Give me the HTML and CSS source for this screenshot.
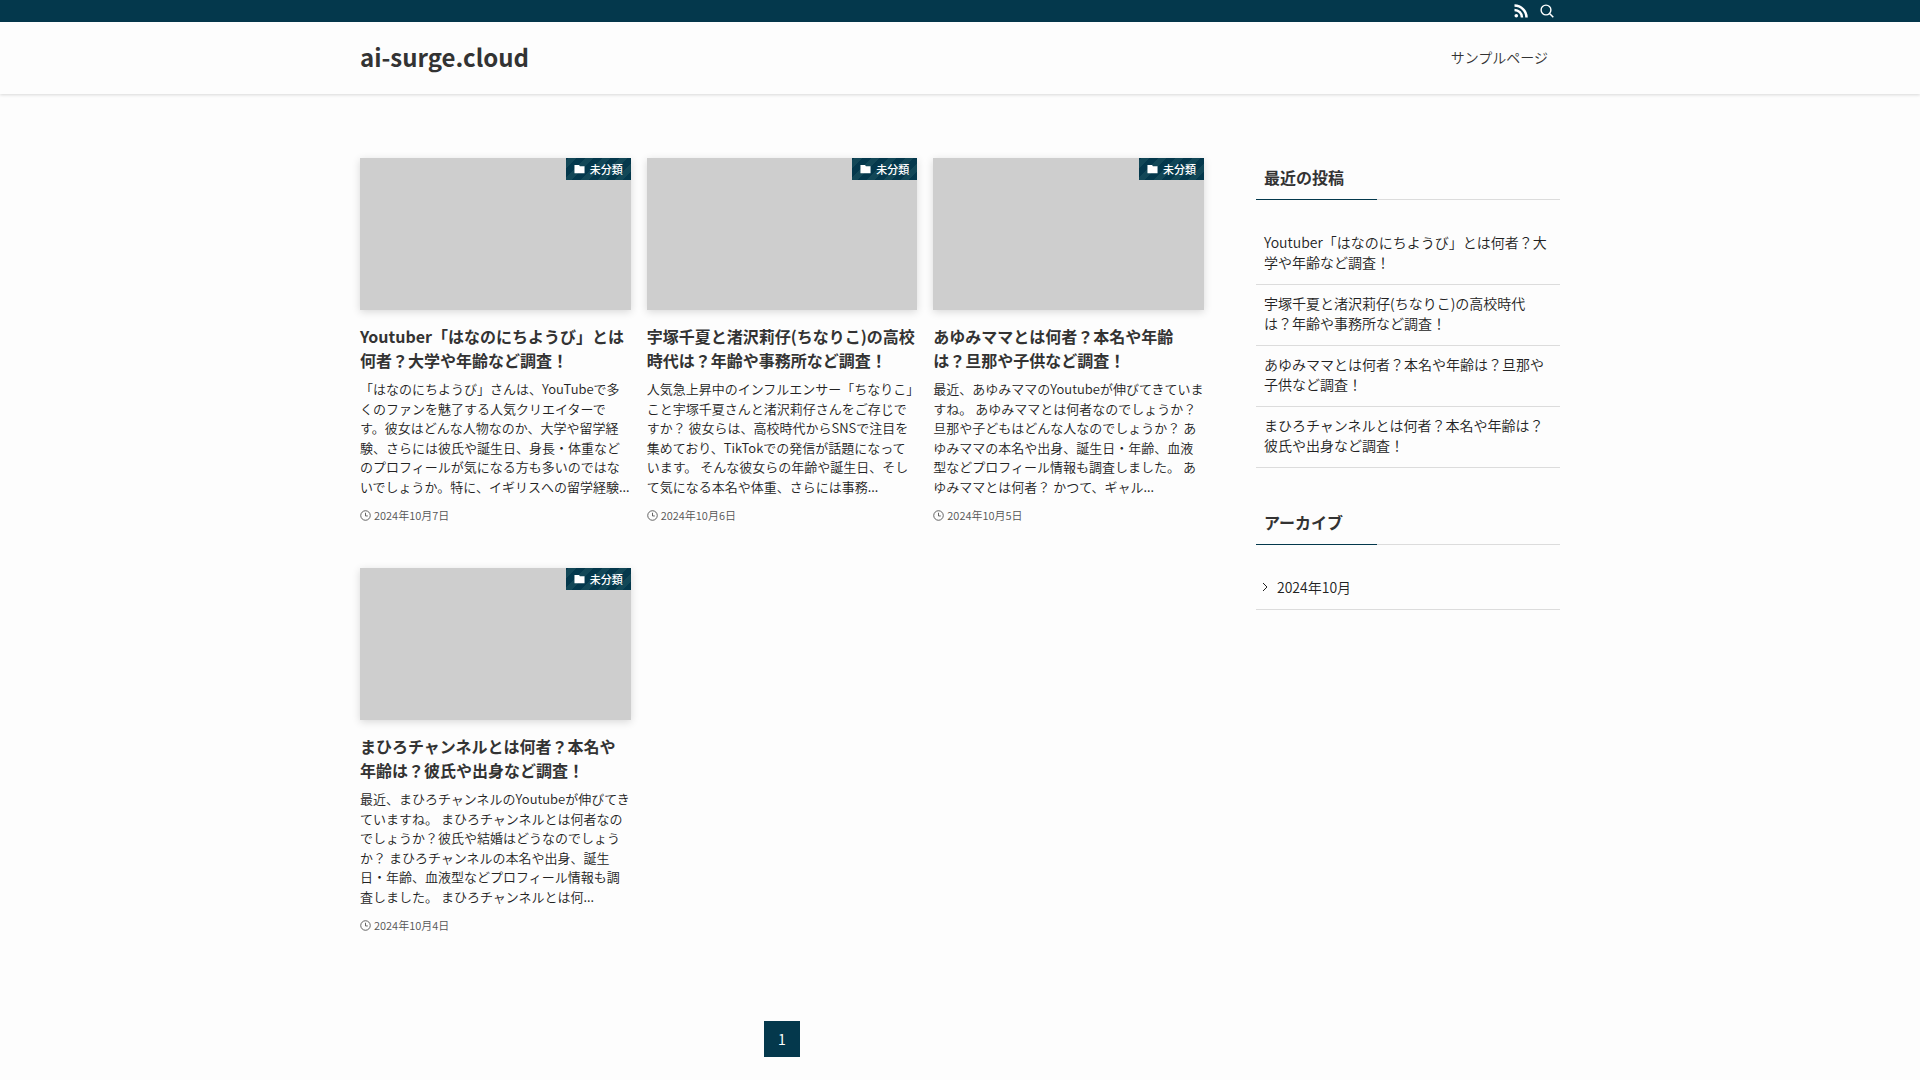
FILE: index.html
```html
<!DOCTYPE html>
<html lang="ja">
<head>
<meta charset="utf-8">
<meta name="viewport" content="width=device-width, initial-scale=1">
<title>ai-surge.cloud</title>
<link rel="stylesheet" href="styles.css">
</head>
<body>
<svg class="sprite" aria-hidden="true">
  <symbol id="folder" viewBox="0 0 12 12"><path d="M.5 1.500h5L6.500 3H11.500v7.500H.5z"/></symbol>
  <symbol id="clock" viewBox="0 0 12 12"><circle cx="6" cy="6" r="5.200"/><path d="M6 3v3.500h2.500"/></symbol>
</svg>
<div class="topbar">
  <div class="container topbar-inner">
    <a class="icon-link" href="#" aria-label="RSS">
      <svg viewBox="0 0 14 14" width="14" height="14"><circle cx="2.300" cy="11.700" r="1.800" fill="currentColor"/><path d="M.5 6a7.500 7.500 0 0 1 7.500 7.500M.5 1.500a12 12 0 0 1 12 12" fill="none" stroke="currentColor" stroke-width="2.500"/></svg>
    </a>
    <button class="icon-link" type="button" aria-label="検索">
      <svg viewBox="0 0 14 14" width="14" height="14"><circle cx="6" cy="6" r="4.900" fill="none" stroke="currentColor" stroke-width="1.400"/><path d="M9.500 9.500l3.800 3.800" fill="none" stroke="currentColor" stroke-width="1.500"/></svg>
    </button>
  </div>
</div>
<header class="header">
  <div class="container header-inner">
    <h1 class="logo"><a href="#">ai-surge.cloud</a></h1>
    <nav><a class="nav-link" href="#">サンプルページ</a></nav>
  </div>
</header>
<div class="container content">
  <main class="main">
    <ul class="posts">
      <li><a class="card" href="#">
        <div class="thumb"><span class="category"><svg class="folder"><use href="#folder"/></svg>未分類</span></div>
        <h2 class="card-title">Youtuber「はなのにちようび」とは何者？大学や年齢など調査！</h2>
        <p class="excerpt">「はなのにちようび」さんは、YouTubeで多くのファンを魅了する人気クリエイターで<br>す。彼女はどんな人物なのか、大学や留学経験、さらには彼氏や誕生日、身長・体重などのプロフィールが気になる方も多いのではないでしょうか。特に、イギリスへの留学経験...</p>
        <time class="date" datetime="2024-10-07"><svg class="clock"><use href="#clock"/></svg>2024年10月7日</time>
      </a></li>
      <li><a class="card" href="#">
        <div class="thumb"><span class="category"><svg class="folder"><use href="#folder"/></svg>未分類</span></div>
        <h2 class="card-title">宇塚千夏と渚沢莉仔(ちなりこ)の高校時代は？年齢や事務所など調査！</h2>
        <p class="excerpt">人気急上昇中のインフルエンサー「ちなりこ」こと宇塚千夏さんと渚沢莉仔さんをご存じですか？ 彼女らは、高校時代からSNSで注目を集めており、TikTokでの発信が話題になっています。 そんな彼女らの年齢や誕生日、そして気になる本名や体重、さらには事務...</p>
        <time class="date" datetime="2024-10-06"><svg class="clock"><use href="#clock"/></svg>2024年10月6日</time>
      </a></li>
      <li><a class="card" href="#">
        <div class="thumb"><span class="category"><svg class="folder"><use href="#folder"/></svg>未分類</span></div>
        <h2 class="card-title">あゆみママとは何者？本名や年齢は？旦那や子供など調査！</h2>
        <p class="excerpt">最近、あゆみママのYoutubeが伸びてきていますね。 あゆみママとは何者なのでしょうか？旦那や子どもはどんな人なのでしょうか？ あゆみママの本名や出身、誕生日・年齢、血液型などプロフィール情報も調査しました。 あゆみママとは何者？ かつて、ギャル...</p>
        <time class="date" datetime="2024-10-05"><svg class="clock"><use href="#clock"/></svg>2024年10月5日</time>
      </a></li>
      <li><a class="card" href="#">
        <div class="thumb"><span class="category"><svg class="folder"><use href="#folder"/></svg>未分類</span></div>
        <h2 class="card-title">まひろチャンネルとは何者？本名や年齢は？彼氏や出身など調査！</h2>
        <p class="excerpt">最近、まひろチャンネルのYoutubeが伸びてきていますね。 まひろチャンネルとは何者なのでしょうか？彼氏や結婚はどうなのでしょうか？ まひろチャンネルの本名や出身、誕生日・年齢、血液型などプロフィール情報も調査しました。 まひろチャンネルとは何...</p>
        <time class="date" datetime="2024-10-04"><svg class="clock"><use href="#clock"/></svg>2024年10月4日</time>
      </a></li>
    </ul>
    <nav class="pager" aria-label="ページ"><span class="page-number" aria-current="page">1</span></nav>
  </main>
  <aside class="sidebar">
    <section>
      <h2 class="widget-title">最近の投稿</h2>
      <ul class="links">
        <li><a href="#">Youtuber「はなのにちようび」とは何者？大学や年齢など調査！</a></li>
        <li><a href="#">宇塚千夏と渚沢莉仔(ちなりこ)の高校時代は？年齢や事務所など調査！</a></li>
        <li><a href="#">あゆみママとは何者？本名や年齢は？旦那や子供など調査！</a></li>
        <li><a href="#">まひろチャンネルとは何者？本名や年齢は？彼氏や出身など調査！</a></li>
      </ul>
    </section>
    <section>
      <h2 class="widget-title">アーカイブ</h2>
      <ul class="links">
        <li><a class="archive" href="#"><svg class="chevron" viewBox="0 0 6 10"><path d="M1 1l4 4-4 4"/></svg>2024年10月</a></li>
      </ul>
    </section>
  </aside>
</div>
</body>
</html>
```
FILE: styles.css
```css
* { box-sizing: border-box; }

body {
  margin: 0;
  background: #fdfdfd;
  color: #333;
  font-family: "Noto Sans CJK JP", sans-serif;
  font-size: 16px;
}

h1, h2, p, ul { margin: 0; padding: 0; }
ul { list-style: none; }
a { color: inherit; text-decoration: none; }
svg { display: block; flex: none; }
.sprite { position: absolute; width: 0; height: 0; }

.container {
  width: 100%;
  max-width: 1296px;
  margin: 0 auto;
  padding: 0 48px;
}

.topbar { background: #04384c; color: #fff; }
.topbar-inner {
  display: flex;
  justify-content: flex-end;
  gap: 12px;
  padding-right: 54px;
}
.icon-link {
  display: flex;
  align-items: center;
  height: 22px;
  padding: 0;
  border: 0;
  background: none;
  color: inherit;
}

.header {
  background: #fdfdfd;
  box-shadow: 0 1px 3px rgba(0, 0, 0, .15);
}
.header-inner {
  display: flex;
  align-items: center;
  justify-content: space-between;
  height: 72px;
  padding-bottom: 3px;
}
.logo { font-size: 24px; font-weight: 700; line-height: 24px; }
.nav-link { display: block; padding: 0 12px; font-size: 14px; font-weight: 350; }

.content {
  display: flex;
  gap: 52px;
  padding-top: 64px;
  padding-bottom: 22px;
}
.main { flex: 1; min-width: 0; }
.sidebar { width: 304px; flex: none; }

.posts {
  display: grid;
  grid-template-columns: repeat(3, minmax(0, 1fr));
  gap: 45px 16px;
}
.card { display: block; }
.thumb {
  display: flex;
  justify-content: flex-end;
  align-items: flex-start;
  aspect-ratio: 16 / 9;
  background: #cecece;
  box-shadow: 0 2px 8px rgba(0, 0, 0, .15);
}
.category {
  display: flex;
  align-items: center;
  gap: 5px;
  height: 22px;
  padding: 0 8px;
  background: repeating-linear-gradient(-45deg, #04384c 0 6px, #124757 6px 12px);
  color: #fff;
  font-size: 11px;
  font-weight: 500;
}
.folder { width: 11px; height: 12px; fill: currentColor; }
.card-title {
  margin-top: 14px;
  font-size: 16px;
  font-weight: 700;
  line-height: 24px;
}
.excerpt {
  margin-top: 7px;
  color: #222;
  font-size: 13px;
  font-weight: 350;
  line-height: 1.5;
}
.date {
  display: flex;
  align-items: center;
  gap: 3px;
  height: 16px;
  margin-top: 11px;
  color: #555;
  font-size: 11px;
  font-weight: 350;
}
.clock { width: 11px; height: 11px; fill: none; stroke: currentColor; }

.pager { display: flex; justify-content: center; margin-top: 88px; }
.page-number {
  display: grid;
  place-items: center;
  width: 36px;
  height: 36px;
  background: #04384c;
  color: #fff;
  font-size: 14px;
}

.sidebar section + section { margin-top: 35px; }
.widget-title {
  padding: 7px 8px 10px;
  border-bottom: 1px solid;
  border-image: linear-gradient(90deg, #04384c 40%, #dcdcdc 40%) 1;
  font-size: 16px;
  font-weight: 700;
  line-height: 24px;
}
.links { margin-top: 24px; }
.links li { border-bottom: 1px solid #dcdcdc; }
.links a {
  display: block;
  padding: 8px 8px 12px;
  color: #222;
  font-size: 14px;
  font-weight: 350;
  line-height: 20px;
}
.links .archive { display: flex; align-items: center; gap: 9px; padding-left: 6px; }
.chevron { width: 6px; height: 10px; fill: none; stroke: currentColor; }
```
